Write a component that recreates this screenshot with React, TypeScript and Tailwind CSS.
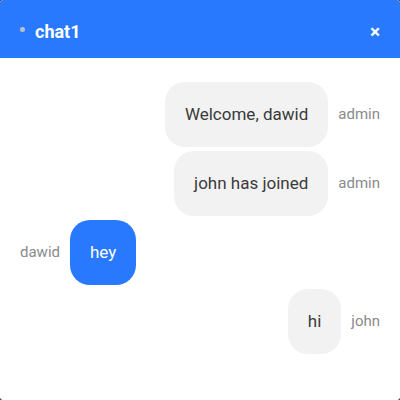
import React from 'react';

type Message = { id: number; user: string; text: string; mine: boolean };

const messages: Message[] = [
  { id: 1, user: 'admin', text: 'Welcome, dawid', mine: false },
  { id: 2, user: 'admin', text: 'john has joined', mine: false },
  { id: 3, user: 'dawid', text: 'hey', mine: true },
  { id: 4, user: 'john', text: 'hi', mine: false },
];

function App() {
  return (
    <div className="w-[400px] h-[400px] bg-[#2b2b2b] font-['Roboto',sans-serif]">
      <div className="h-full bg-white rounded-[3px] overflow-hidden">
        <div className="h-[58px] bg-[#2979ff] flex items-center px-5 pt-[4px] rounded-t-[3px]">
          <span className="w-[5px] h-[5px] rounded-full bg-[#b5c1d3] mr-[10px] -mt-[4px]" />
          <span className="text-white font-bold text-[18px]">chat1</span>
          <span className="ml-auto text-white text-[19px] font-bold leading-none">×</span>
        </div>

        <div className="px-5 pt-6 flex flex-col gap-[4px]">
          {messages.map((m) =>
            m.mine ? (
              <div key={m.id} className="flex items-center">
                <span className="text-[15px] text-[#8a8a8a] mr-[10px]">{m.user}</span>
                <div className="bg-[#2979ff] text-white text-[17px] leading-[25px] px-5 py-5 rounded-[20px]">
                  {m.text}
                </div>
              </div>
            ) : (
              <div key={m.id} className="flex items-center justify-end">
                <div className="bg-[#f2f2f2] text-[#3a3a3a] text-[17px] leading-[25px] px-5 py-5 rounded-[20px]">
                  {m.text}
                </div>
                <span className="text-[15px] text-[#8a8a8a] ml-[10px]">{m.user}</span>
              </div>
            )
          )}
        </div>
      </div>
    </div>
  );
}

export default App;
